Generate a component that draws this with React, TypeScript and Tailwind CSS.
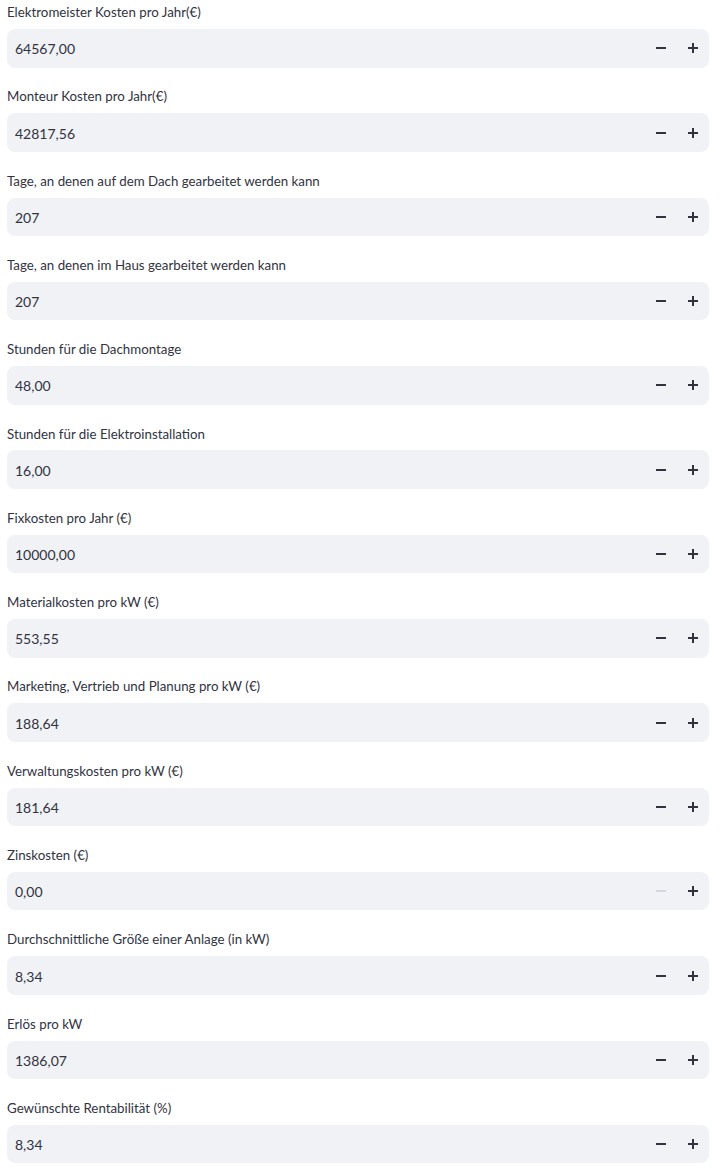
const fields = [
  { label: "Elektromeister Kosten pro Jahr(€)", value: "64567,00" },
  { label: "Monteur Kosten pro Jahr(€)", value: "42817,56" },
  { label: "Tage, an denen auf dem Dach gearbeitet werden kann", value: "207" },
  { label: "Tage, an denen im Haus gearbeitet werden kann", value: "207" },
  { label: "Stunden für die Dachmontage", value: "48,00" },
  { label: "Stunden für die Elektroinstallation", value: "16,00" },
  { label: "Fixkosten pro Jahr (€)", value: "10000,00" },
  { label: "Materialkosten pro kW (€)", value: "553,55" },
  { label: "Marketing, Vertrieb und Planung pro kW (€)", value: "188,64" },
  { label: "Verwaltungskosten pro kW (€)", value: "181,64" },
  { label: "Zinskosten (€)", value: "0,00", minDisabled: true },
  { label: "Durchschnittliche Größe einer Anlage (in kW)", value: "8,34" },
  { label: "Erlös pro kW", value: "1386,07" },
  { label: "Gewünschte Rentabilität (%)", value: "8,34" },
];

function NumberInput({ label, value, minDisabled }: { label: string; value: string; minDisabled?: boolean }) {
  return (
    <div>
      <div className="h-6 mb-1 flex items-center text-[13.3px] text-[#31333f]">{label}</div>
      <div className="h-[38.5px] flex items-center rounded-lg bg-[#f0f2f6]">
        <div className="flex-1 pl-2 pt-px text-[14px] text-[#31333f]">{value}</div>
        <button className="w-8 h-full flex items-center justify-center">
          <svg width="10" height="10" viewBox="0 0 10 10">
            <rect x="0" y="4" width="10" height="2" fill={minDisabled ? "#d3d6de" : "#31333f"} />
          </svg>
        </button>
        <button className="w-8 h-full flex items-center justify-center">
          <svg width="10" height="10" viewBox="0 0 10 10">
            <rect x="0" y="4" width="10" height="2" fill="#31333f" />
            <rect x="4" y="0" width="2" height="10" fill="#31333f" />
          </svg>
        </button>
      </div>
    </div>
  );
}

export default function App() {
  return (
    <main className="bg-white min-h-screen pl-[7px] pr-[12px] pt-px flex flex-col gap-[17.8px]" style={{ fontFamily: "Lato, 'Liberation Sans', sans-serif" }}>
      {fields.map((f) => (
        <NumberInput key={f.label} label={f.label} value={f.value} minDisabled={f.minDisabled} />
      ))}
    </main>
  );
}
